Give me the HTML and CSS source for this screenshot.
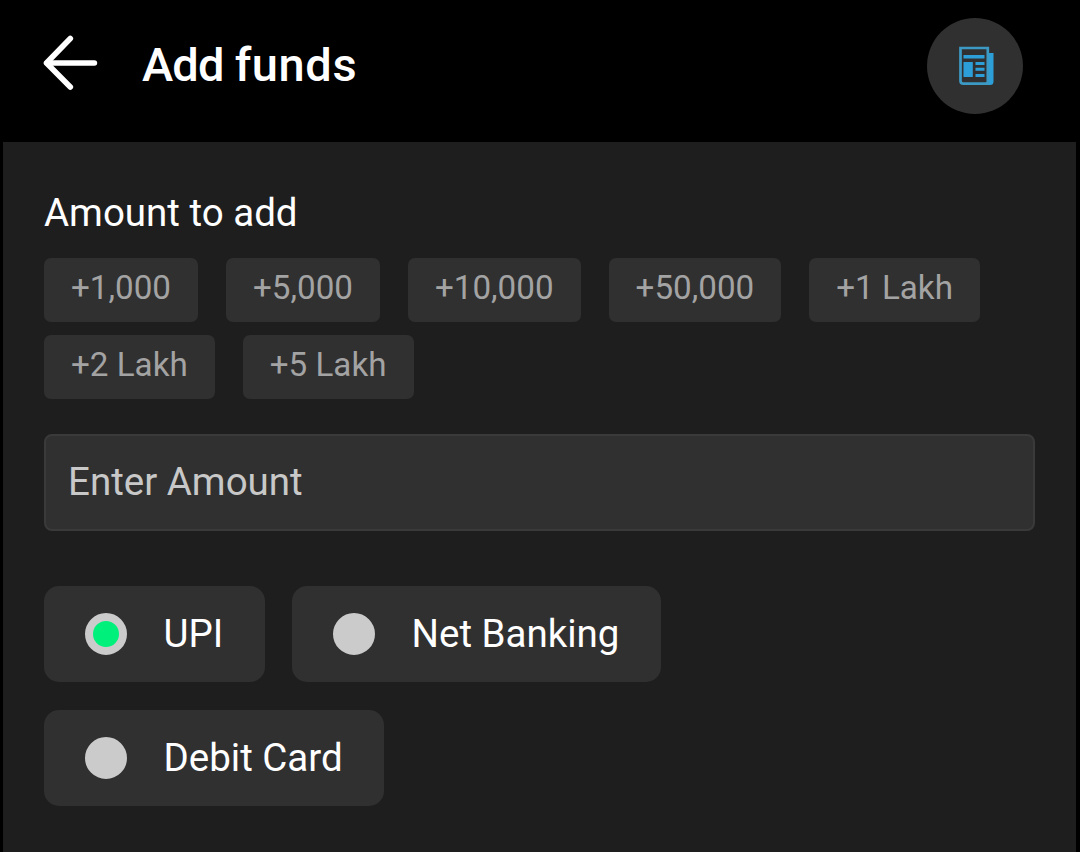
FILE: index.html
```html
<!DOCTYPE html>
<html lang="en">
<head>
    <meta charset="UTF-8">
    <meta name="viewport" content="width=device-width, initial-scale=1.0">
    <title>Add funds</title>
    <link rel="stylesheet" href="styles.css">
</head>
<body>

    <header class="topbar">
        <button class="back" aria-label="Back">
            <svg width="56" height="56" viewBox="0 0 56 56" fill="none" stroke="#fff" stroke-width="5.6" stroke-linecap="round" stroke-linejoin="round">
                <path d="M28.3 4.5L4.5 29L28.3 53"/>
                <path d="M5 29H52.4"/>
            </svg>
        </button>
        <h1>Add <span>funds</span></h1>
        <button class="news" aria-label="News">
            <svg width="36" height="40" viewBox="0 0 36 40">
                <path d="M30 7H35.5V35.5Q35.5 39 32 39H28V36H30Z" fill="#2d9fd8"/>
                <path d="M2.5 2H29.8V37.6H5.5Q2.5 37.6 2.5 35Z" fill="none" stroke="#3c99c4" stroke-width="2.7"/>
                <path d="M5.5 9H26.5V12.5H5.5ZM5.5 16H14.8V31H5.5ZM17.5 16H26.5V19H17.5ZM17.5 21.8H26.5V24.8H17.5ZM17.5 28H26.5V31H17.5Z" fill="#2d9fd8"/>
            </svg>
        </button>
    </header>

    <main class="panel">
        <h2>Amount to add</h2>
        <div class="amounts">
            <button>+1,000</button>
            <button>+5,000</button>
            <button>+10,000</button>
            <button>+50,000</button>
            <button>+1 Lakh</button>
            <button>+2 Lakh</button>
            <button>+5 Lakh</button>
        </div>

        <input type="text" id="amount" placeholder="Enter Amount">

        <div class="methods">
            <label class="upi"><input type="radio" name="method" checked><span>UPI</span></label>
            <label class="bank"><input type="radio" name="method"><span>Net Banking</span></label>
            <label class="card"><input type="radio" name="method"><span>Debit Card</span></label>
        </div>
    </main>

</body>
</html>
```
FILE: styles.css
```css
*{
    box-sizing: border-box;
}

body{
    margin: 0;
    height: 852px;
    overflow: hidden;
    background: #000;
    color: #fff;
    font-family: Roboto, sans-serif;
    display: flex;
    flex-direction: column;
}

button{
    border: none;
    padding: 0;
    font-family: inherit;
}

.topbar{
    height: 142px;
    padding: 18px 57px 0 42px;
    display: flex;
    align-items: flex-start;
}

.back{
    width: 56px;
    height: 56px;
    margin-top: 16px;
    background: none;
}

.back svg,
.news svg{
    display: block;
}

h1{
    margin: 19px 0 0 44px;
    font-size: 47px;
    line-height: 55px;
    font-weight: 500;
    letter-spacing: -0.8px;
}

h1 span{
    letter-spacing: 0.6px;
}

.news{
    width: 96px;
    height: 96px;
    margin-left: auto;
    padding-left: 2px;
    border-radius: 50%;
    background: #303030;
    display: flex;
    align-items: center;
    justify-content: center;
}

.panel{
    flex: 1;
    margin: 0 4px 0 3px;
    padding: 48px 41px 0;
    background: #1e1e1e;
}

h2{
    margin: 0;
    font-size: 38.5px;
    line-height: 46px;
    font-weight: 400;
}

.amounts{
    margin-top: 22px;
    display: flex;
    flex-wrap: wrap;
    gap: 13px 28px;
}

.amounts button{
    height: 64px;
    padding: 0 27px 4px;
    border-radius: 7px;
    background: #303030;
    color: #a3a3a3;
    font-size: 33.2px;
    line-height: 40px;
}

#amount{
    display: block;
    width: 991px;
    height: 97px;
    margin-top: 35px;
    padding: 0 22px 2px;
    border: 2px solid #3a3a3a;
    border-radius: 8px;
    background: #303030;
    color: #fff;
    font: 400 38.5px Roboto, sans-serif;
}

#amount::placeholder{
    color: #c8c8c8;
}

.methods{
    width: 800px;
    margin-top: 55px;
    display: flex;
    flex-wrap: wrap;
    gap: 28.4px 27px;
}

.methods label{
    height: 96px;
    padding: 0 41px;
    display: flex;
    align-items: center;
    border-radius: 15px;
    background: #303030;
    font-size: 38.5px;
    line-height: 46px;
}

.upi{
    width: 221px;
}

.bank{
    width: 369px;
}

.card{
    width: 340px;
}

.methods input{
    appearance: none;
    flex: none;
    width: 42px;
    height: 42px;
    margin: 0 36.5px 0 0;
    border: 8px solid #cbcbcb;
    border-radius: 50%;
    background: #cbcbcb;
}

.methods input:checked{
    background: #00f07c;
}

.methods span{
    padding-bottom: 1px;
    white-space: nowrap;
}
```
